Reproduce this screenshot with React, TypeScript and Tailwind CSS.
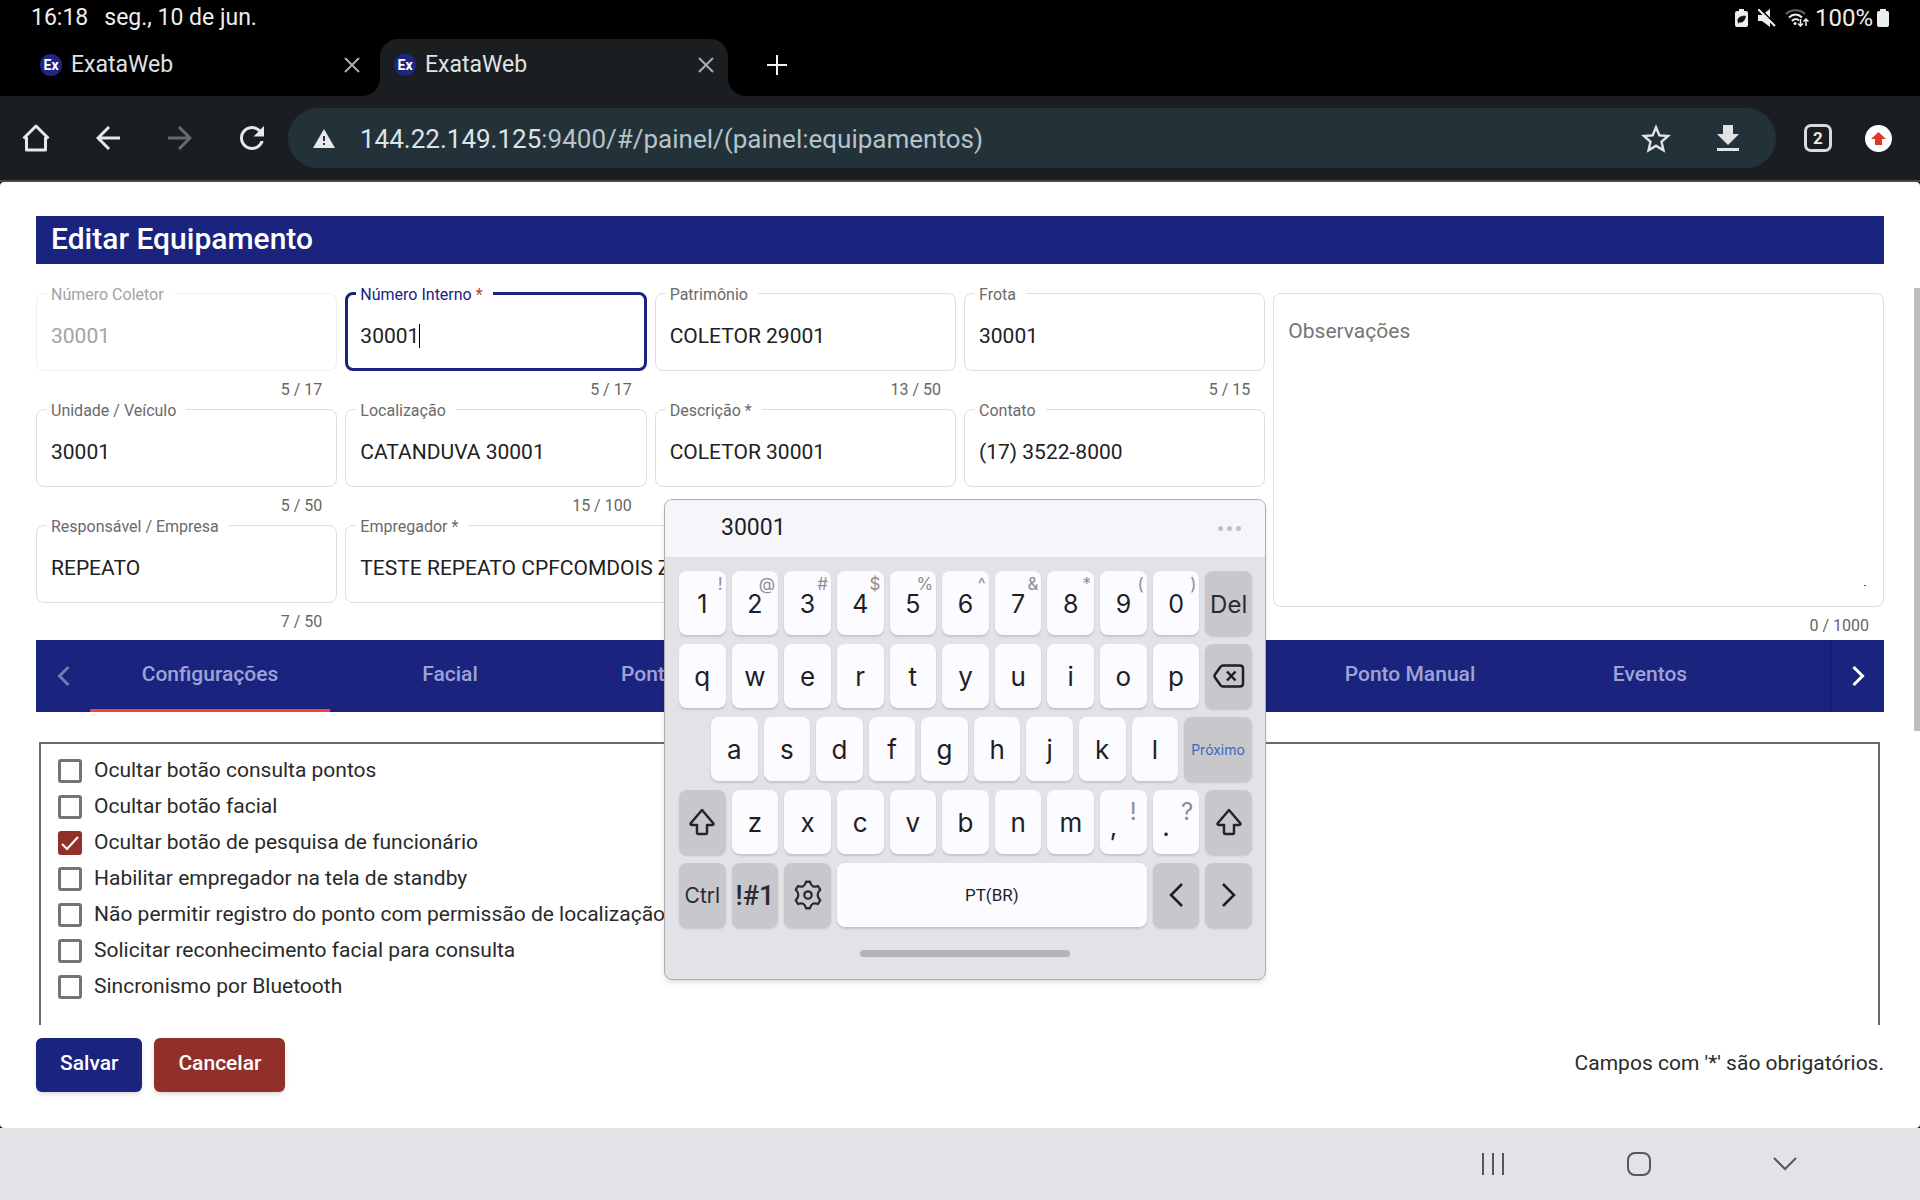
import React, { useState } from "react";

function Favicon() {
  return (
    <svg width="22" height="22" viewBox="0 0 22 22" className="shrink-0" aria-hidden="true">
      <circle cx="11" cy="11" r="11" fill="#20257f" />
      <text x="11" y="16" textAnchor="middle" fontSize="14" fontWeight="700" fill="#fff" fontFamily="Roboto, sans-serif">
        Ex
      </text>
    </svg>
  );
}

function CloseIcon() {
  return (
    <svg width="16" height="16" viewBox="0 0 16 16" fill="none" stroke="#a9adb0" strokeWidth="2">
      <path d="M1 1L15 15M15 1L1 15" />
    </svg>
  );
}

function BrowserTab({ active = false }: { active?: boolean }) {
  return (
    <div
      className={
        active
          ? "relative flex h-[57px] w-[348px] items-center rounded-t-[18px] bg-[#1a1e20] pb-[6px] pl-[14px] pr-[14px]"
          : "flex h-[57px] w-[355px] items-center pb-[6px] pl-[15px] pr-5"
      }
    >
      {active && (
        <>
          <svg className="absolute -left-[18px] bottom-0" width="18" height="18" viewBox="0 0 18 18" fill="#1a1e20">
            <path d="M18 0V18H0C10 18 18 10 18 0Z" />
          </svg>
          <svg className="absolute -right-[18px] bottom-0" width="18" height="18" viewBox="0 0 18 18" fill="#1a1e20">
            <path d="M0 0V18H18C8 18 0 10 0 0Z" />
          </svg>
        </>
      )}
      <Favicon />
      <span className="ml-[9px] flex-1 text-[23px] leading-[30px] text-[#dfe2e4]">ExataWeb</span>
      <button aria-label="Fechar aba">
        <CloseIcon />
      </button>
    </div>
  );
}

function StatusBar() {
  return (
    <header className="flex h-[39px] items-start justify-between bg-black pl-[31px] pr-[31px] text-[23px] leading-[36px] text-[#eeeeee]">
      <div className="flex gap-4">
        <span>16:18</span>
        <span>seg., 10 de jun.</span>
      </div>
      <div className="flex items-center">
        <svg width="13" height="18" viewBox="0 0 13 18" className="mr-[10px]">
          <path d="M4 0H9V2H11Q13 2 13 4V16Q13 18 11 18H2Q0 18 0 16V4Q0 2 2 2H4Z" fill="#eee" />
          <path d="M3 13C2 9 5 7 10.500 7C10 11 8 14 4.500 13L3 14.500M4 13L8 9.500" fill="#111" stroke="#111" strokeWidth="0.600" />
        </svg>
        <svg width="18" height="18" viewBox="0 0 18 18" className="mr-[9px]">
          <path d="M0 6H4L12 0V18L4 12H0Z" fill="#eee" />
          <path d="M2 0L18 16" stroke="#000" strokeWidth="2" />
          <path d="M0 0L17 17" stroke="#eee" strokeWidth="2" />
        </svg>
        <svg width="24" height="18" viewBox="0 0 24 18" fill="none" className="mr-[6px]">
          <path d="M1 5C6 0 15 0 20 5" stroke="#666" strokeWidth="2" />
          <path d="M4 8.500C8 4.500 13 4.500 17 8.500M7 12C9 9.800 12 9.800 14 11.500" stroke="#eee" strokeWidth="2" />
          <circle cx="10" cy="14.500" r="1.500" fill="#eee" />
          <path d="M15.500 10V17M13 14.500L15.500 17L18 14.500M21 17V10M18.500 12.500L21 10L23.500 12.500" stroke="#eee" strokeWidth="1.500" />
        </svg>
        <span className="text-[24px]">100%</span>
        <svg width="12" height="18" viewBox="0 0 12 18" className="ml-[4px]" fill="#eee">
          <path d="M3 0H9V2H10.500Q12 2 12 4V16Q12 18 10 18H2Q0 18 0 16V4Q0 2 1.500 2H3Z" />
        </svg>
      </div>
    </header>
  );
}

function Toolbar() {
  return (
    <div className="flex h-[86px] items-center border-b-2 border-[#44494c] bg-[#1a1e20]">
      <div className="flex w-[288px] items-center gap-9 pl-[18px]">
        <button aria-label="Início" className="flex size-9 items-center justify-center">
          <svg width="28" height="28" viewBox="0 0 28 28" fill="none" stroke="#e6e8ea" strokeWidth="3" strokeLinejoin="round">
            <path d="M1.500 14.500L14 2L26.500 14.500M4.500 13V26H23.500V13" />
          </svg>
        </button>
        <button aria-label="Voltar" className="flex size-9 items-center justify-center">
          <svg width="24" height="24" viewBox="0 0 24 24" fill="none" stroke="#e6e8ea" strokeWidth="3">
            <path d="M24 12H2M13 1L2 12L13 23" />
          </svg>
        </button>
        <button aria-label="Avançar" className="flex size-9 items-center justify-center">
          <svg width="24" height="24" viewBox="0 0 24 24" fill="none" stroke="#666a6c" strokeWidth="3">
            <path d="M0 12H22M11 1L22 12L11 23" />
          </svg>
        </button>
        <button aria-label="Recarregar" className="flex size-9 items-center justify-center">
          <svg width="24" height="24" viewBox="4 4 16 16" fill="#e6e8ea">
            <path d="M17.650 6.350C16.200 4.900 14.210 4 12 4c-4.420 0-7.990 3.580-7.990 8s3.570 8 7.990 8c3.730 0 6.840-2.550 7.730-6h-2.080c-.82 2.330-3.040 4-5.650 4-3.310 0-6-2.690-6-6s2.690-6 6-6c1.660 0 3.140.69 4.220 1.780L13 11h7V4l-2.350 2.350z" />
          </svg>
        </button>
      </div>
      <div className="flex h-[60px] flex-1 items-center rounded-full bg-[#233238] pl-[25px] pr-[30px]">
        <svg width="22" height="19" viewBox="0 0 22 19" className="shrink-0">
          <path d="M11 0L22 19H0Z" fill="#e6e8ea" />
          <path d="M11 7V12M11 14V16" stroke="#233238" strokeWidth="2" />
        </svg>
        <div className="ml-[25px] flex-1 pt-px text-[26px] leading-8 text-[#b6c3c9]">
          <span className="text-[#dde4e8]">144.22.149.125</span>:9400/#/painel/(painel:equipamentos)
        </div>
        <button aria-label="Favoritar" className="flex size-9 items-center justify-center">
          <svg width="30" height="29" viewBox="2 2 20 19" fill="#e0e4e6">
            <path d="M22 9.240l-7.190-.62L12 2 9.190 8.630 2 9.240l5.460 4.730L5.820 21 12 17.270 18.180 21l-1.630-7.030L22 9.240zM12 15.400l-3.760 2.270 1-4.280-3.320-2.880 4.380-.38L12 6.100l1.710 4.040 4.380.38-3.320 2.880 1 4.280L12 15.400z" />
          </svg>
        </button>
        <button aria-label="Baixar" className="ml-9 flex size-9 items-center justify-center">
          <svg width="22" height="26" viewBox="0 0 22 26" fill="#e0e4e6">
            <path d="M6 0H16V9H22L11 20L0 9H6ZM0 23H22V26H0Z" />
          </svg>
        </button>
      </div>
      <button className="ml-7 flex size-7 items-center justify-center rounded-[7px] border-3 border-[#d9dcde] text-[17px] font-bold leading-5 text-[#e6e8ea]">
        2
      </button>
      <button aria-label="Atualização" className="ml-[33px] mr-7 flex size-[27px] items-center justify-center rounded-full bg-white">
        <svg width="15" height="13" viewBox="0 0 15 13" fill="#dd3a2c">
          <path d="M7.500 0L15 7H11V13H4V7H0Z" />
        </svg>
      </button>
    </div>
  );
}

type FieldProps = {
  id: string;
  label: string;
  value: string;
  counter?: string;
  required?: boolean;
  disabled?: boolean;
  focused?: boolean;
  className?: string;
};

function Field({ id, label, value, counter, required, disabled, focused, className = "" }: FieldProps) {
  const [text, setText] = useState(value);
  const tone = focused
    ? "border-3 border-[#1a237e]"
    : disabled
      ? "border border-[#f0f0f0]"
      : "border border-[#dedede]";
  const labelTone = focused ? "ml-2 text-[#1a237e]" : disabled ? "ml-[10px] text-[#a3a3a3]" : "ml-[10px] text-[#6a6a6a]";
  return (
    <div className={"min-w-0 " + className}>
      <fieldset className={"h-[87px] min-w-0 rounded-[8px] " + tone}>
        <legend className={"h-[18px] pl-1 pr-[10px] text-[16px] leading-[22px] " + labelTone}>
          <label htmlFor={id}>
            {label}
            {required && <span className={focused ? "text-[#c0392b]" : ""}> *</span>}
          </label>
        </legend>
        <div className={"flex h-[63px] items-center pt-1 " + (focused ? "pl-3" : "pl-[14px]")}>
          <input
            id={id}
            value={text}
            disabled={disabled}
            onChange={(e) => setText(e.target.value)}
            className={
              (focused ? "field-sizing-content " : "w-full ") +
              "h-8 bg-transparent text-[21px] leading-8 outline-none " +
              (disabled ? "text-[#a3a3a3]" : "text-[#212121]")
            }
          />
          {focused && <span className="h-6 w-px bg-black" />}
        </div>
      </fieldset>
      <div className="h-[29px] pr-[15px] pt-[9px] text-right text-[16px] leading-5 text-[#666]">{counter}</div>
    </div>
  );
}

function Form() {
  return (
    <form className="mb-2 mt-5 grid grid-cols-6 gap-x-2">
      <Field id="coletor" label="Número Coletor" value="30001" counter="5 / 17" disabled />
      <Field id="interno" label="Número Interno" value="30001" counter="5 / 17" required focused />
      <Field id="patrimonio" label="Patrimônio" value="COLETOR 29001" counter="13 / 50" />
      <Field id="frota" label="Frota" value="30001" counter="5 / 15" />
      <div className="relative col-span-2 row-span-3 -mb-2 pt-[9px]">
        <textarea
          aria-label="Observações"
          placeholder="Observações"
          className="block h-[314px] w-full resize-none rounded-[8px] border border-[#dedede] px-[14px] py-[21px] text-[21px] leading-8 outline-none placeholder:text-[#757575]"
        />
        <span className="absolute right-[18px] top-[301px] h-px w-[2px] bg-[#555]" />
        <div className="pr-[15px] pt-2 text-right text-[16px] leading-[22px] text-[#666]">0 / 1000</div>
      </div>
      <Field id="unidade" label="Unidade / Veículo" value="30001" counter="5 / 50" />
      <Field id="localizacao" label="Localização" value="CATANDUVA 30001" counter="15 / 100" />
      <Field id="descricao" label="Descrição" value="COLETOR 30001" required />
      <Field id="contato" label="Contato" value="(17) 3522-8000" />
      <Field id="responsavel" label="Responsável / Empresa" value="REPEATO" counter="7 / 50" />
      <Field id="empregador" label="Empregador" value="TESTE REPEATO CPFCOMDOIS Z" required className="col-span-3" />
    </form>
  );
}

function TabStrip() {
  return (
    <div className="flex h-[72px] shrink-0 bg-[#1a237e] text-[21px] font-medium text-[#9da3d6]">
      <button aria-label="Abas anteriores" className="flex w-[54px] items-center justify-center">
        <svg width="13" height="20" viewBox="0 0 13 20" fill="none" stroke="#7278b2" strokeWidth="3">
          <path d="M11.500 1L2.500 10L11.500 19" />
        </svg>
      </button>
      <div className="flex min-w-0 flex-1 overflow-hidden" role="tablist">
        <button role="tab" aria-selected="true" className="w-60 shrink-0 border-b-3 border-[#f44336]">
          Configurações
        </button>
        <button role="tab" className="w-60 shrink-0 pb-[3px]">Facial</button>
        <button role="tab" className="w-60 shrink-0 pb-[3px] pl-[51px] text-left">Ponto</button>
        <div className="w-[480px] shrink-0" />
        <button role="tab" className="w-60 shrink-0 pb-[3px]">Ponto Manual</button>
        <button role="tab" className="w-60 shrink-0 pb-[3px]">Eventos</button>
      </div>
      <button aria-label="Próximas abas" className="flex w-[54px] items-center justify-center border-l-2 border-[#161d6c]">
        <svg width="13" height="20" viewBox="0 0 13 20" fill="none" stroke="#fff" strokeWidth="3">
          <path d="M1.500 1L10.500 10L1.500 19" />
        </svg>
      </button>
    </div>
  );
}

const options = [
  "Ocultar botão consulta pontos",
  "Ocultar botão facial",
  "Ocultar botão de pesquisa de funcionário",
  "Habilitar empregador na tela de standby",
  "Não permitir registro do ponto com permissão de localização",
  "Solicitar reconhecimento facial para consulta",
  "Sincronismo por Bluetooth",
];

function OptionRow({ text, initial }: { text: string; initial: boolean }) {
  const [on, setOn] = useState(initial);
  return (
    <label className="flex h-9 items-center text-[21px] leading-6 text-[#2a2a2a]">
      <span className="relative mr-3 flex size-6">
        <input
          type="checkbox"
          checked={on}
          onChange={() => setOn(!on)}
          className="size-6 appearance-none rounded-[3px] border-3 border-[#747474] checked:border-[#932f2b] checked:bg-[#932f2b]"
        />
        {on && (
          <svg className="pointer-events-none absolute inset-0" width="24" height="24" viewBox="0 0 24 24" fill="none" stroke="#fff" strokeWidth="2">
            <path d="M4 13L9 18L20 6" />
          </svg>
        )}
      </span>
      <span className="whitespace-nowrap pb-[3px]">{text}</span>
    </label>
  );
}

function ShiftIcon() {
  return (
    <svg width="26" height="28" viewBox="0 0 26 28" fill="none" stroke="#252529" strokeWidth="2.500" strokeLinejoin="round">
      <path d="M13 2L24.500 15.500Q24.500 17 23 17H18V24.500Q18 26 16.500 26H9.500Q8 26 8 24.500V17H3Q1.500 17 1.500 15.500Z" />
    </svg>
  );
}

function Key({ children, dark, hint, className = "" }: { children: React.ReactNode; dark?: boolean; hint?: string; className?: string }) {
  return (
    <button
      className={
        "relative flex h-16 min-w-0 items-center justify-center rounded-[8px] shadow-[0_2px_2px_#c4c4c9] " +
        (dark ? "bg-[#c8c7cc] text-[#2b2b2f] " : "bg-[#fcfbff] text-[#1f1f23] ") +
        className
      }
    >
      {children}
      {hint && <span className="absolute right-[3px] top-[3px] text-[17px] leading-5 text-[#8d8d92]">{hint}</span>}
    </button>
  );
}

function Keyboard() {
  const numbers = ["1", "2", "3", "4", "5", "6", "7", "8", "9", "0"];
  const hints = ["!", "@", "#", "$", "%", "^", "&", "*", "(", ")"];
  return (
    <section
      aria-label="Teclado"
      className="absolute left-[664px] top-[499px] h-[481px] w-[602px] overflow-hidden rounded-[8px] border border-[#adadb2] bg-[#e3e2e7] font-[Inter,Roboto,sans-serif] shadow-md"
    >
      <div className="flex h-[57px] items-center justify-between bg-[#f6f6fa] pl-14 pr-6 text-[23px] text-[#1f1f23]">
        <span className="font-[Roboto,sans-serif]">30001</span>
        <button aria-label="Mais" className="flex gap-1">
          <span className="size-[5px] rounded-full bg-[#c2c1c6]" />
          <span className="size-[5px] rounded-full bg-[#c2c1c6]" />
          <span className="size-[5px] rounded-full bg-[#c2c1c6]" />
        </button>
      </div>
      <div className="flex flex-col gap-[9px] pl-[14px] pr-[13px] pt-[14px] text-[26px]">
        <div className="grid grid-cols-11 gap-x-[6px]">
          {numbers.map((n, i) => (
            <Key key={n} hint={hints[i]} className="pt-1 text-[25px]">{n}</Key>
          ))}
          <Key dark className="pt-1 text-[24px]">Del</Key>
        </div>
        <div className="grid grid-cols-11 gap-x-[6px]">
          {"qwertyuiop".split("").map((c) => (
            <Key key={c}>{c}</Key>
          ))}
          <Key dark>
            <svg width="32" height="24" viewBox="0 0 32 24" fill="none" stroke="#1f1f23" strokeWidth="2.500" strokeLinejoin="round">
              <path d="M10 1.500H27Q30 1.500 30 4.500V19.500Q30 22.500 27 22.500H10Q8.500 22.500 7.500 21.300L2 13.500Q1 12 2 10.500L7.500 2.700Q8.500 1.500 10 1.500Z" />
              <path d="M14 7.500L22.500 16.500M22.500 7.500L14 16.500" />
            </svg>
          </Key>
        </div>
        <div className="flex gap-x-[6px] pl-8">
          {"asdfghjkl".split("").map((c) => (
            <Key key={c} className="flex-1">{c}</Key>
          ))}
          <Key dark className="w-[68px] text-[14px] text-[#3f66b8]!">Próximo</Key>
        </div>
        <div className="grid grid-cols-11 gap-x-[6px]">
          <Key dark><ShiftIcon /></Key>
          {"zxcvbnm".split("").map((c) => (
            <Key key={c}>{c}</Key>
          ))}
          <Key className="items-end! pb-2 pr-5">
            ,<span className="absolute right-[10px] top-[10px] text-[24px] leading-6 text-[#8d8d92]">!</span>
          </Key>
          <Key className="items-end! pb-2 pr-5">
            .<span className="absolute right-[6px] top-[10px] text-[24px] leading-6 text-[#8d8d92]">?</span>
          </Key>
          <Key dark><ShiftIcon /></Key>
        </div>
        <div className="grid grid-cols-11 gap-x-[6px]">
          <Key dark className="pt-[2px] text-[21px]">Ctrl</Key>
          <Key dark className="pt-[2px] font-[Roboto,sans-serif] text-[27px] font-medium">!#1</Key>
          <Key dark>
            <svg width="28" height="30" viewBox="0 0 24 26" fill="none" stroke="#2b2b2f" strokeWidth="2" strokeLinejoin="round">
              <path d="M10.300 1.500H13.700Q14.500 4.600 16.200 5.400Q18 6.200 20.600 5.200L22.600 8.400Q20.400 10.600 20.400 13Q20.400 15.400 22.600 17.600L20.600 20.800Q18 19.800 16.200 20.600Q14.500 21.400 13.700 24.500H10.300Q9.500 21.400 7.800 20.600Q6 19.800 3.400 20.800L1.400 17.600Q3.600 15.400 3.600 13Q3.600 10.600 1.400 8.400L3.400 5.200Q6 6.200 7.800 5.400Q9.500 4.600 10.300 1.500Z" />
              <circle cx="12" cy="13" r="3.200" />
            </svg>
          </Key>
          <Key className="col-span-6 pt-[2px] font-[Roboto,sans-serif] text-[17px]">PT(BR)</Key>
          <Key dark>
            <svg width="14" height="24" viewBox="0 0 14 24" fill="none" stroke="#1f1f23" strokeWidth="2.500">
              <path d="M13 1L2 12L13 23" />
            </svg>
          </Key>
          <Key dark>
            <svg width="14" height="24" viewBox="0 0 14 24" fill="none" stroke="#1f1f23" strokeWidth="2.500">
              <path d="M1 1L12 12L1 23" />
            </svg>
          </Key>
        </div>
      </div>
      <div className="mx-auto mt-[23px] h-[7px] w-[210px] rounded-full bg-[#b4b3b8]" />
    </section>
  );
}

export default function App() {
  return (
    <div className="relative flex h-screen flex-col overflow-hidden bg-black font-[Roboto,sans-serif]">
      <StatusBar />
      <nav className="flex h-[57px] shrink-0 items-center bg-black pl-[25px]" aria-label="Abas">
        <BrowserTab />
        <BrowserTab active />
        <button aria-label="Nova aba" className="mb-[6px] ml-[39px]">
          <svg width="20" height="20" viewBox="0 0 20 20" stroke="#f2f2f2" strokeWidth="2">
            <path d="M10 0V20M0 10H20" />
          </svg>
        </button>
      </nav>
      <Toolbar />
      <main className="flex min-h-0 flex-1 rounded-[4px] bg-white">
        <div className="flex min-w-0 flex-1 flex-col pl-9 pr-[30px] pt-[34px]">
          <h1 className="h-12 shrink-0 bg-[#1a237e] px-[15px] text-[30px] font-medium leading-[46px] text-white">
            Editar Equipamento
          </h1>
          <Form />
          <TabStrip />
          <div className="ml-[3px] mr-[4px] mt-[30px] min-h-0 flex-1 overflow-hidden border-x-2 border-t-2 border-[#696969] pl-[17px] pt-[9px]">
            {options.map((o, i) => (
              <OptionRow key={o} text={o} initial={i === 2} />
            ))}
          </div>
          <div className="mb-9 mt-[13px] flex shrink-0 items-center gap-3 text-[21px]">
            <button className="h-[54px] rounded-[6px] bg-[#1a237e] px-6 pb-[2px] font-medium text-white shadow-md">Salvar</button>
            <button className="h-[54px] rounded-[6px] bg-[#932f2b] px-6 pb-[2px] font-medium text-white shadow-md">Cancelar</button>
            <p className="ml-auto pb-[2px] text-[#2a2a2a]">Campos com '*' são obrigatórios.</p>
          </div>
        </div>
        <div className="mt-[106px] h-[443px] w-[6px] bg-[#bdbdbd]" />
      </main>
      <footer className="flex h-[72px] shrink-0 items-center justify-end bg-[#e3e2e7] pr-[62px]">
        <button aria-label="Recentes" className="flex w-[146px] justify-center">
          <svg width="22" height="22" viewBox="0 0 22 22" stroke="#56565b" strokeWidth="2">
            <path d="M1 0V22M11 0V22M21 0V22" />
          </svg>
        </button>
        <button aria-label="Tela inicial" className="flex w-[146px] justify-center">
          <span className="size-6 rounded-[8px] border-2 border-[#56565b]" />
        </button>
        <button aria-label="Ocultar teclado" className="flex w-[146px] justify-center">
          <svg width="24" height="14" viewBox="0 0 24 14" fill="none" stroke="#56565b" strokeWidth="2">
            <path d="M1 1L12 12L23 1" />
          </svg>
        </button>
      </footer>
      <Keyboard />
    </div>
  );
}
